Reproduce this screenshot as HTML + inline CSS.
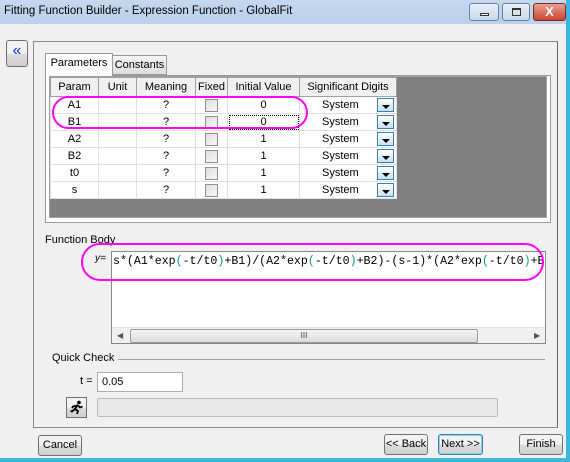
<!DOCTYPE html>
<html><head><style>
*{box-sizing:border-box}
body{margin:0;width:570px;height:462px;overflow:hidden;background:#f0f0f0;font-family:"Liberation Sans",sans-serif;font-size:11px;color:#000;position:relative}
.a{position:absolute;white-space:nowrap}
.title{left:0;top:0;width:570px;height:24px;background:linear-gradient(#c4d8ee,#b9d1ea);}
.btn{position:absolute;border:1px solid #707070;border-radius:3px;background:linear-gradient(#f2f2f2 50%,#dddddd 50%,#cfcfcf);text-align:center;line-height:19px;font-size:11px;white-space:nowrap}
table{border-collapse:collapse;font-size:11px}
td{border:1px solid #e0e0e0;height:17px;padding:0;text-align:center;background:#fff;white-space:nowrap}
th{border:1px solid #a0a0a0;height:19px;padding:0;font-weight:normal;background:#f0f0f0;white-space:nowrap}
.cb{display:inline-block;width:13px;height:13px;border:1px solid #8f8f8f;background:linear-gradient(135deg,#ddd,#f8f8f8);vertical-align:middle}
.dd{position:absolute;right:2px;top:1px;width:17px;height:14px;border:1px solid #3c7fb1;background:linear-gradient(#fff,#c7e2f5)}
.dd:after{content:"";position:absolute;left:4px;top:6px;border:4px solid transparent;border-top:4px solid #000;border-bottom:0}
.mono{font-family:"Liberation Mono",monospace;font-size:11.6px}
.t{color:#0a9a9a}
</style></head><body>
<div class="a title"></div>
<div class="a" style="left:4px;top:5px;font-size:11.5px">Fitting Function Builder - Expression Function - GlobalFit</div>
<div class="a" style="left:469px;top:3px;width:30px;height:18px;border:1px solid #6d7f98;border-radius:3px;background:linear-gradient(#e8f0f8,#c8d8ea)"><div class="a" style="left:10px;top:9px;width:9px;height:3px;border:1px solid #333;background:#fff"></div></div>
<div class="a" style="left:502px;top:3px;width:28px;height:18px;border:1px solid #6d7f98;border-radius:3px;background:linear-gradient(#e8f0f8,#c8d8ea)"><div class="a" style="left:9px;top:4px;width:9px;height:8px;border:1px solid #333;border-top-width:2px"></div></div>
<div class="a" style="left:533px;top:3px;width:33px;height:18px;border:1px solid #7a2a20;border-radius:3px;background:linear-gradient(#e8a090,#c84530);color:#fff;font-weight:bold;text-align:center;line-height:16px;font-size:13px">X</div>
<div class="a" style="left:566px;top:0;width:4px;height:462px;background:#3cb8e0"></div>
<div class="a" style="left:0;top:458px;width:570px;height:4px;background:#3cb8e0"></div>

<div class="btn" style="left:6px;top:40px;width:22px;height:27px;color:#1530e0;font-size:16px;line-height:20px">«</div>
<div class="a" style="left:33px;top:41px;width:525px;height:387px;border:1px solid #888;border-right-color:#666"></div>

<div class="a" style="left:45px;top:75px;width:506px;height:148px;border:1px solid #999;background:#fff"></div>
<div class="a" style="left:49px;top:76px;width:498px;height:142px;background:#808080;border:1px solid #a0a0a0"></div>
<div class="a" style="left:112px;top:55px;width:55px;height:20px;border:1px solid #999;background:linear-gradient(#f4f4f4,#ddd);text-align:center;line-height:18px">Constants</div>
<div class="a" style="left:45px;top:53px;width:68px;height:23px;border:1px solid #999;border-bottom:none;background:#fff;text-align:center;line-height:18px">Parameters</div>

<table class="a" style="left:50px;top:77px">
<tr><th style="width:48px">Param</th><th style="width:38px">Unit</th><th style="width:59px">Meaning</th><th style="width:32px">Fixed</th><th style="width:72px">Initial Value</th><th style="width:97px">Significant Digits</th></tr>
<tr><td>A1</td><td></td><td>?</td><td><span class="cb"></span></td><td>0</td><td style="position:relative;text-align:left;padding-left:22px">System<span class="dd"></span></td></tr>
<tr><td>B1</td><td></td><td>?</td><td><span class="cb"></span></td><td style="outline:1px dotted #000;outline-offset:-2px">0</td><td style="position:relative;text-align:left;padding-left:22px">System<span class="dd"></span></td></tr>
<tr><td>A2</td><td></td><td>?</td><td><span class="cb"></span></td><td>1</td><td style="position:relative;text-align:left;padding-left:22px">System<span class="dd"></span></td></tr>
<tr><td>B2</td><td></td><td>?</td><td><span class="cb"></span></td><td>1</td><td style="position:relative;text-align:left;padding-left:22px">System<span class="dd"></span></td></tr>
<tr><td>t0</td><td></td><td>?</td><td><span class="cb"></span></td><td>1</td><td style="position:relative;text-align:left;padding-left:22px">System<span class="dd"></span></td></tr>
<tr><td>s</td><td></td><td>?</td><td><span class="cb"></span></td><td>1</td><td style="position:relative;text-align:left;padding-left:22px">System<span class="dd"></span></td></tr>
</table>
<div class="a" style="left:52px;top:96px;width:256px;height:33px;border:2px solid #ff00ff;border-radius:17px"></div>

<div class="a" style="left:45px;top:234px">Function Body</div>
<div class="a" style="left:95px;top:253px;font-size:10px;font-style:italic">y=</div>
<div class="a" style="left:111px;top:251px;width:435px;height:93px;border:1px solid #828790;background:#fff;overflow:hidden">
<div class="a mono" style="left:1px;top:3px;white-space:nowrap">s*(A1*exp<span class="t">(</span>-t/t0<span class="t">)</span>+B1)/(A2*exp<span class="t">(</span>-t/t0<span class="t">)</span>+B2)-(s-1)*(A2*exp<span class="t">(</span>-t/t0<span class="t">)</span>+B2)</div>
<div class="a" style="left:0;top:75px;width:433px;height:17px;background:#f0f0f0;border-top:1px solid #e0e0e0">
<div class="a" style="left:5px;top:3px;font-size:8px;color:#555">◀</div>
<div class="a" style="left:18px;top:1px;width:348px;height:14px;border:1px solid #999;border-radius:2px;background:linear-gradient(#f4f4f4,#dcdcdc);text-align:center;font-size:8px;line-height:12px;color:#444">III</div>
<div class="a" style="left:422px;top:3px;font-size:8px;color:#555">▶</div>
</div></div>
<div class="a" style="left:81px;top:243px;width:463px;height:38px;border:2px solid #ff00ff;border-radius:19px"></div>

<div class="a" style="left:52px;top:352px">Quick Check</div>
<div class="a" style="left:118px;top:359px;width:427px;height:1px;background:#a0a0a0"></div>
<div class="a" style="left:80px;top:375px">t =</div>
<div class="a" style="left:97px;top:372px;width:86px;height:20px;border:1px solid #abadb3;background:#fff;padding:3px 4px">0.05</div>
<div class="btn" style="left:66px;top:397px;width:21px;height:21px;border-radius:0">
<svg width="19" height="19" viewBox="0 0 19 19" style="position:absolute;left:0;top:0"><circle cx="12" cy="4.5" r="1.8" fill="#000"/><path d="M11 6.5 L8 11 L11 13 L10 16 M8 11 L5 13.5 L3.5 13 M10 7.5 L6 8.5 L5 10 M11 7.5 L13 9.5 L15.5 8.5" stroke="#000" stroke-width="1.8" fill="none"/></svg></div>
<div class="a" style="left:97px;top:398px;width:401px;height:19px;border:1px solid #bcbcbc;border-radius:2px;background:#e8e8e8"></div>

<div class="btn" style="left:38px;top:435px;width:44px;height:21px">Cancel</div>
<div class="btn" style="left:384px;top:434px;width:44px;height:21px">&lt;&lt; Back</div>
<div class="btn" style="left:438px;top:434px;width:45px;height:21px;border-color:#3c7fb1;box-shadow:inset 0 0 0 1px #8fd0f0">Next &gt;&gt;</div>
<div class="btn" style="left:519px;top:434px;width:44px;height:21px">Finish</div>
</body></html>
